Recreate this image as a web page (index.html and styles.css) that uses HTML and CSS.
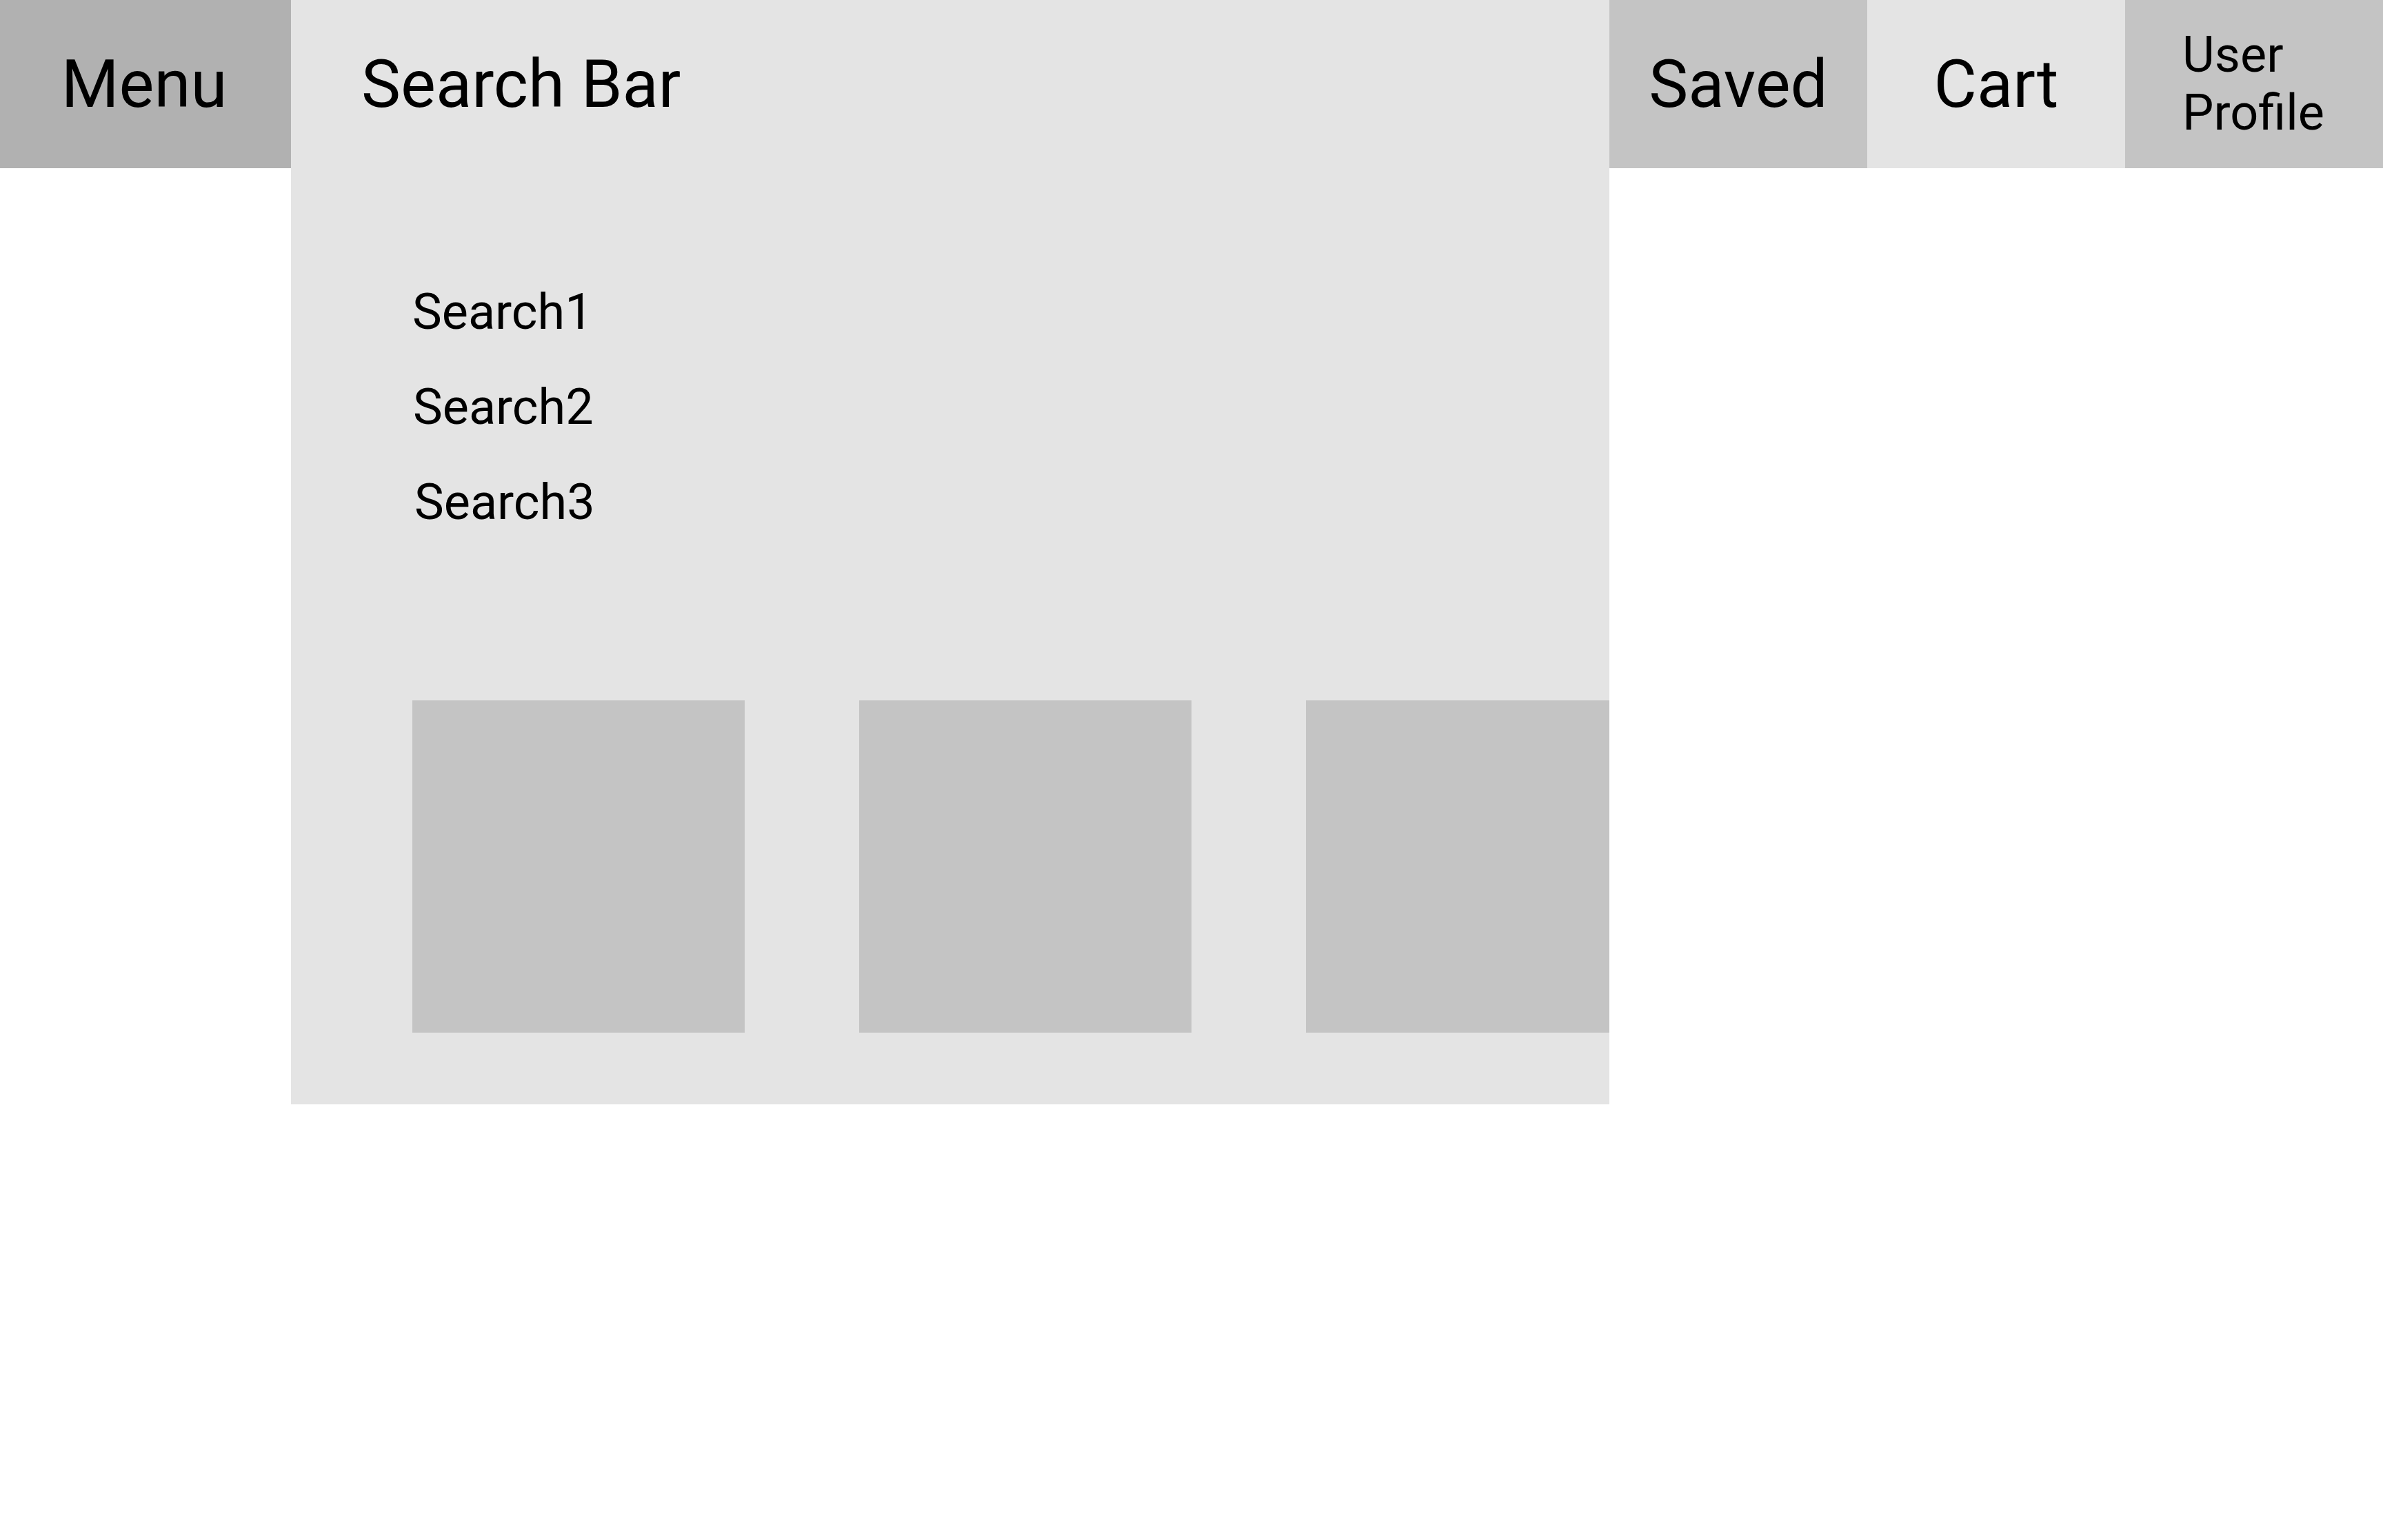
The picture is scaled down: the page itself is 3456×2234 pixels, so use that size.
FILE: index.html
```html
<!DOCTYPE html>
<html lang="en">
<head>
<meta charset="utf-8">
<title>Wireframe</title>
<link rel="stylesheet" href="styles.css">
</head>
<body>
<div class="top">
  <div class="tab tab-menu">Menu</div>
  <div class="panel">
    <div class="panel-head">Search Bar</div>
    <ul class="results">
      <li class="result">Search1</li>
      <li class="result r2">Search2</li>
      <li class="result r3">Search3</li>
    </ul>
    <div class="cards">
      <div class="card"></div>
      <div class="card"></div>
      <div class="card"></div>
    </div>
  </div>
  <div class="tab tab-mid">Saved</div>
  <div class="tab tab-light">Cart</div>
  <div class="tab tab-mid tab-small"><span class="two-line">User<br>Profile</span></div>
</div>
</body>
</html>
```

FILE: styles.css
```css
html, body {
  margin: 0;
  padding: 0;
  background: #ffffff;
}
body {
  font-family: Roboto, "Liberation Sans", sans-serif;
  color: #000000;
  width: 3456px;
  height: 2234px;
  overflow: hidden;
}
.top {
  display: flex;
  align-items: flex-start;
  width: 3456px;
}
.tab {
  height: 244px;
  width: 374px;
  flex: 0 0 auto;
  display: flex;
  align-items: center;
  justify-content: center;
  font-size: 96px;
  line-height: normal;
  white-space: nowrap;
}
.tab-menu {
  width: 422px;
  background: #b1b1b1;
  padding-right: 4px;
  box-sizing: border-box;
}
.tab-mid {
  background: #c4c4c4;
}
.tab-light {
  background: #e4e4e4;
}
.tab-small {
  font-size: 72px;
}
.two-line {
  display: inline-block;
  text-align: left;
  line-height: 84px;
  padding-right: 2px;
}
.panel {
  width: 1912px;
  flex: 0 0 auto;
  background: #e4e4e4;
  display: flex;
  flex-direction: column;
  padding-bottom: 104px;
}
.panel-head {
  height: 244px;
  display: flex;
  align-items: center;
  padding-left: 102px;
  font-size: 96px;
  white-space: nowrap;
}
.results {
  list-style: none;
  margin: 167px 0 0 0;
  padding: 0 0 0 176px;
  display: flex;
  flex-direction: column;
  gap: 54px;
  font-size: 72px;
  line-height: 84px;
}
.result.r2 { padding-left: 1px; }
.result.r3 { padding-left: 3px; }
.cards {
  margin-top: 245px;
  padding-left: 176px;
  display: flex;
  gap: 166px;
  overflow: hidden;
}
.card {
  flex: 0 0 482px;
  height: 482px;
  background: #c4c4c4;
}
```
